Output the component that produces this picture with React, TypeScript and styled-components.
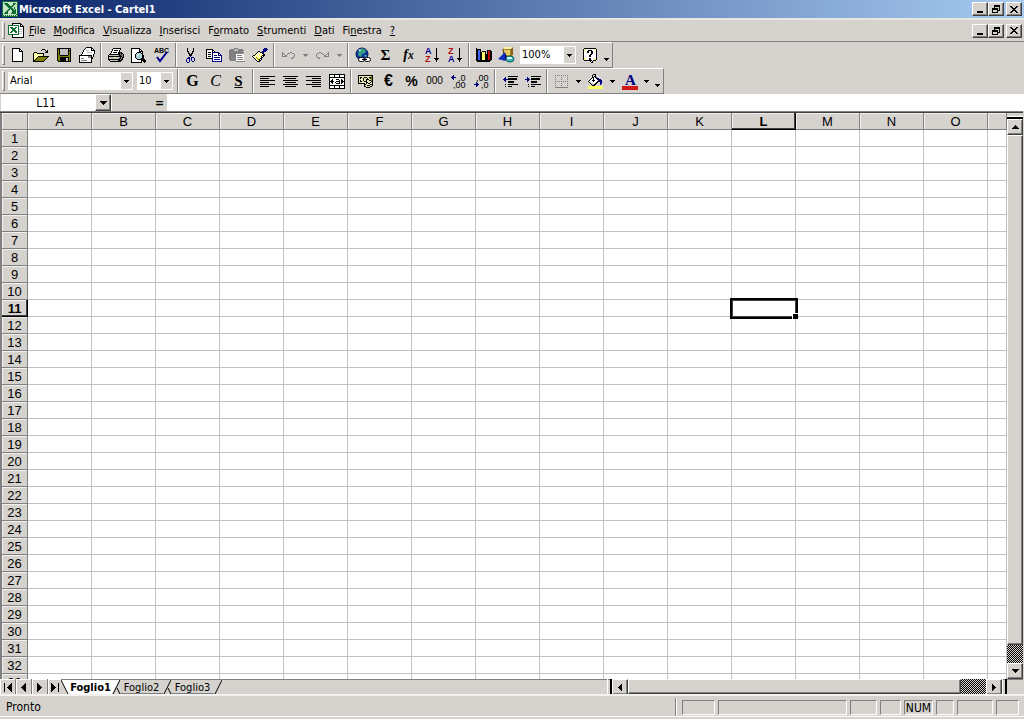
import React from "react";
import styled, { createGlobalStyle, css } from "styled-components";

const FACE = "#d6d3ce";
const SHADOW = "#808080";
const DARK = "#404040";
const UI = `"DejaVu Sans Condensed", "DejaVu Sans", sans-serif`;
const SHEET = `"Liberation Sans", Arial, sans-serif`;

const Global = createGlobalStyle`
  * { box-sizing: border-box; }
  body { margin: 0; background: ${FACE}; color: #000; font-family: ${UI}; font-size: 11px; }
  button, input, select { font-family: inherit; font-size: inherit; color: inherit; margin: 0; padding: 0; border: 0; border-radius: 0; background: none; outline: 0; }
`;

const raised = css`
  background: ${FACE};
  border: 1px solid;
  border-color: #fff ${DARK} ${DARK} #fff;
  box-shadow: inset -1px -1px 0 ${SHADOW};
`;
const checker = css`
  background: conic-gradient(#000 25%, ${FACE} 0 50%, #000 0 75%, ${FACE} 0) 0 0 / 2px 2px;
`;

/* ---------- pixel drawings ---------- */

const INK: Record<string, string> = {
  k: "#000", w: "#fff", y: "#ffff66", o: "#808000", g: "#808080", b: "#000080",
  l: "#c0c0c0", r: "#c00000", t: "#a8d0d8", u: "#4060ff", n: "#107030", c: "#c8e4c8", p: "#e4e4b0",
};

const Svg = styled.svg`
  display: block;
  flex: none;
`;

function Pixels({ rows }: { rows: string[] }) {
  const w = Math.max(...rows.map((r) => r.length));
  const runs: React.ReactNode[] = [];
  rows.forEach((row, y) => {
    let x = 0;
    while (x < row.length) {
      const ch = row[x];
      let n = 1;
      while (row[x + n] === ch) n++;
      if (INK[ch]) runs.push(<rect key={`${x}-${y}`} x={x} y={y} width={n} height={1} fill={INK[ch]} />);
      x += n;
    }
  });
  return (
    <Svg width={w} height={rows.length} viewBox={`0 0 ${w} ${rows.length}`} shapeRendering="crispEdges" aria-hidden>
      {runs}
    </Svg>
  );
}

const ART: Record<string, string[]> = {
  excel: [
    "nnnnnnnnnnnnnnnn", "nccccccccccccccn", "ncnnnncccccnnncn", "nccnnnnccccnnccn", "ncccnnnnccnncccn",
    "nccccnnnnnnccccn", "ncccccnnnnccnccn", "nccccccnnnncnccn", "ncccccnncnnncncn", "nccccnncccnnnncn",
    "ncccnnccccnnnncn", "nccnnnccccnnnncn", "ncnnnncccnnnnncn", "ncccccccccccccnn", "nncncncncncncncn", "nnnnnnnnnnnnnnnn",
  ],
  book: [
    "....kkkkkkkkk...", "....kwwwwwwwkk..", "nnnnnnnnnnnwkwk.", "nwwwwwwwwwnwkkkk", "nwnnnwwnnwnwwwwk", "nwwnnnnnwwnwwwwk",
    "nwwwnnnwwwnlllwk", "nwwwnnnnwwnwwwwk", "nwwnnwnnnwnlllwk", "nwnnwwwnnwnwwwwk", "nwwwwwwwwwnlllwk", "nnnnnnnnnnnwwwwk",
    "....kwwwwwwwwwwk", "....kwwwwwwwwwwk", "....kkkkkkkkkkkk",
  ],
  new: [
    "kkkkkkkk...", "kwwwwwwkk..", "kwwwwwwkwk.", "kwwwwwwkkkk", "kwwwwwwwwwk", "kwwwwwwwwwk", "kwwwwwwwwwk",
    "kwwwwwwwwwk", "kwwwwwwwwwk", "kwwwwwwwwwk", "kwwwwwwwwwk", "kwwwwwwwwwk", "kwwwwwwwwwk", "kkkkkkkkkkk",
  ],
  open: [
    ".........kkk....", "........k...k.k.", ".............kk.", ".kkk........kkk.", "kywykkkkkkk.....", "kwywywywywk.....",
    "kywywywywyk.....", "kwywykkkkkkkkkkk", "kywykoooooooook.", "kwykoooooooook..", "kykoooooooook...", "kkoooooooook....", "kkkkkkkkkkk.....",
  ],
  save: [
    "kkkkkkkkkkkkkk", "kokllllllllklk", "kokllllllllkkk", "kokllllllllkok", "kokllllllllkok", "kokllllllllkok", "kokllllllllkok",
    "kookkkkkkkkook", "kooooooooooook", "kookkkkkkkkkok", "kookkkkkkllkok", "kookkkkkkllkok", "kookkkkkkllkok", ".kkkkkkkkkkkkk",
  ],
  mail: [
    ".......kkkkkk...", "......kwwwwwkk..", ".....kwwwwwwkwk.", "....kwwlllwwkkkk", "....kwwwwwwwwwwk", "...kwwwwlllllwwk",
    "...kwwwwwwwwwwwk", "..kwwwwwwwwwwwk.", "kkkkkkkkkkkkkwk.", "kwwwwwwwwgggkwk.", "kwwwwwwwwgggkk..", "kwgggwwwwwwwkk..",
    "kwwwwwwwwwwwk...", "kwggggggwwwwk...", "kwwwwwwwwwwwk...", "kkkkkkkkkkkkk...",
  ],
  print: [
    ".....kkkkkkkk...", "....kwwwwwwwk...", "....kwkkkkwk....", "...kwwwwwwwk....", "...kwkkkkwkkkk..", "..kwwwwwwwkkgkk.",
    ".kkkkkkkkkkkgkgk", "kllllllllllkkggk", "kkkkkkkkkkkkkkgk", "klllllyyllllkgkk", "kllllllllllkkgk.", "kkkkkkkkkkkkgkk.",
    ".kllllllllkkkk..", "..kkkkkkkkkkk...",
  ],
  preview: [
    "kkkkkkkkk......", "kwwwwwwwkk.....", "kwwwwwwwkwk....", "kwwwwwwwkkkk...", "kwwwwwkkkkwk...", "kwwwwkttttkk...", "kwwwkttwtttk...",
    "kwwwktwttttkk..", "kwwwkttttttkk..", "kwwwkttttttkk..", "kwwwwkttttkkk..", "kwwwwwkkkkkkkk.", "kwwwwwwwwwkkkkk", "kwwwwwwwwwk.kkk", "kkkkkkkkkkk..k.",
  ],
  cut: [
    "..k.....k..", "..k.....k..", "..k.....k..", "..kk...kk..", "...k...k...", "...kk.kk...", "....kkk....", "....kkk....",
    ".....b.....", "...bb.bbb..", "..bbb.b..b.", ".b..b.b..b.", ".b..b.b..b.", ".b..b..bb..", "..bb.......",
  ],
  copy: [
    "kkkkkkk.........", "kwwwwwkk........", "kwwwwwkwk.......", "kwkkkwbbbbbbb...", "kwwwwwbwwwwwbb..", "kwkkkwbwwwwwbwb.", "kwwwwwbwbbbwbbbb",
    "kwkkkwbwwwwwwwwb", "kwwwwwbwbbbbbbwb", "kkkkkkbwwwwwwwwb", "......bwbbbbbbwb", "......bwwwwwwwwb", "......bbbbbbbbbb",
  ],
  paste: [
    ".....gggg......", ".ggggglllggggg.", "gggggllllgggggg", "gggggggggggggg.", "ggggggggggggggg", "gggggggggggggg.", "gggggggwwwwwww.", "gggggggwgggggww",
    "gggggggwwwwwwww", "gggggggwggggggw", "gggggggwwwwwwww", "gggggggwggggggw", ".ggggggwwwwwwww", ".......ggggggggg",
  ],
  brush: [
    "............bbb.", "...........bbbbb", "...........bbbb.", "......kk..bbbb..", ".....kwwkbkb....", "....kwywywkk....", "...kwywywywkk...",
    ".kkywywywykkk...", "kwywywywykwk....", ".kwyoywywkk.....", "..kwyoyykk......", "...kwyokwk......", "....kwykk.......", ".....kkk........",
  ],
  undo: [
    "g.......gg...", "gg....gg..gg.", "g.g..g......g", "g..gg.......g", "ggggg.......g", "..........gg.", ".........gg..",
  ],
  redo: [
    "...gg.......g", ".gg..gg....gg", "g......g..g.g", "g.......gg..g", "g.......ggggg", ".gg..........", "..gg.........",
  ],
  merge: [
    "kkkkkkkkkkkkkkkk", "kwwwwkwwwwkwwwwk", "kwwwwkwwwwkwwwwk", "kkkkkkkkkkkkkkkk", "kwwwwwwwwwwwwwwk", "kwwkwwwkkkwwkwwk", "kwkkwwwwwwkwkkwk",
    "kkkkkwwkkkkwkkkk", "kwkkwwkwwwkwkkwk", "kwwkwwwkkkkwkwwk", "kwwwwwwwwwwwwwwk", "kkkkkkkkkkkkkkkk", "kwwwwkwwwwkwwwwk", "kwwwwkwwwwkwwwwk", "kkkkkkkkkkkkkkkk",
  ],
  money: [
    "kkkkkkkkkkkkkkk", "kppppppppppppok", "kpkkppkkkppkkok", "kpkppkpppkppkok", "kppppkppkkkppok", "kpkppkppkppkkok",
    "kpkkppkkkppppkk", "kpppppppkkppkpk", "kkkkkkkpkpkkppk", "......kkppppkkk", "......kppkkkppk", "......kkppppkk.", "........kkkk...",
  ],
  left: ["kkkkkkkkkkkkkkk", "", "kkkkkkkkk", "", "kkkkkkkkkkkkkkk", "", "kkkkkkkkk", "", "kkkkkkkkkkkkkkk", "", "kkkkkkkkk"],
  center: ["kkkkkkkkkkkkkkk", "", "..kkkkkkkkkkk", "", "kkkkkkkkkkkkkkk", "", "..kkkkkkkkkkk", "", "kkkkkkkkkkkkkkk", "", "..kkkkkkkkkkk"],
  right: ["kkkkkkkkkkkkkkk", "", "......kkkkkkkkk", "", "kkkkkkkkkkkkkkk", "", "......kkkkkkkkk", "", "kkkkkkkkkkkkkkk", "", "......kkkkkkkkk"],
  outdent: [
    "......kkkkkkkkkk", "...b............", "..bb..kkkkkkkkk.", ".bbbbbkkkkkkkkk.", "..bb............", "...b..kkkkkk....", "......kkkkkk....", "................", "...k..kkkkkkkkkk", "", "...k..kkkk......",
  ],
  indent: [
    "......kkkkkkkkkk", "..b.............", "..bb..kkkkkkkkk.", "bbbbb.kkkkkkkkk.", "..bb............", "..b...kkkkkk....", "......kkkkkk....", "................", "...k..kkkkkkkkkk", "", "...k..kkkk......",
  ],
  borders: [
    "g.g.g.g.g.g.g", "", "g.....g.....g", "", "g.....g.....g", "", "g.g.g.g.g.g.g", "", "g.....g.....g", "", "g.....g.....g", "", "ggggggggggggg",
  ],
  fill: [
    ".....kkk.......", "....k..k.......", "....k.kk.......", "....kkwkb......", "...kwkwwkbb....", "..kwwkwwwkbbb..", ".kwwkkkwwwkbbb.", "kwwwwkwwwkkbbb.",
    ".klwwwwwkk..bb.", "..kllwwkk...bb.", "...kllkk....b..", "....kkk........", "yyyyyyyyyyyyyyy", "yyyyyyyyyyyyyyy", "yyyyyyyyyyyyyyy",
  ],
  chart: [
    "k...............", "kkkkk...........", "kkuuk......kkkk.", "kkuuk.kkkk.krrkk", "kkuukkyyyk.krrkk", "kkuukkyyyk.krrkk", "kkuukkyyykkkrrkk", "kkuukkyyykkkrrkk",
    "kkuukkyyykkkrrkk", "kkuukkyyykkkrrkk", "kkuukkyyykkkrrkk", "kkuukkyyykkkrrkk", "kkkkkkkkkkkkkkk.", ".kkkkkkkkkkkkk..",
  ],
  help: [
    ".kkkkkkkkkkkk.", "kyywwwwwwwwyyk", "kywwwkkkkwwwyk", "kwwwkkwwkkwwwk", "kwwwkkwwkkwwwk", "kwwwwwwwkkwwwk", "kwwwwwwkkwwwwk", "kwwwwwkkwwwwwk", "kwwwwwkkwwwwwk",
    "kwwwwwwwwwwwwk", "kywwwwkkwwwwyk", "kyywwwkkwwwyyk", ".kkkkkkkkwkkk.", ".......kwk....", "........kk....",
  ],
  minimize: ["", "", "", "", "", "", "kkkkkk", "kkkkkk"],
  restore: ["..kkkkkk", "..kkkkkk", "..k....k", "kkkkkk.k", "kkkkkk.k", "k....kkk", "k....k..", "kkkkkk.."],
  close: ["kk....kk", ".kk..kk.", "..kkkk..", "...kk...", "..kkkk..", ".kk..kk.", "kk....kk"],
  down: ["kkkkk", ".kkk.", "..k.."],
  downGrey: ["ggggg", ".ggg.", "..g.."],
  downBig: ["kkkkkkk", ".kkkkk.", "..kkk..", "...k..."],
  up: ["...k...", "..kkk..", ".kkkkk.", "kkkkkkk"],
  prev: ["...k", "..kk", ".kkk", "kkkk", ".kkk", "..kk", "...k"],
  next: ["k...", "kk..", "kkk.", "kkkk", "kkk.", "kk..", "k..."],
  navPrev: ["....k", "...kk", "..kkk", ".kkkk", "kkkkk", ".kkkk", "..kkk", "...kk", "....k"],
  navNext: ["k....", "kk...", "kkk..", "kkkk.", "kkkkk", "kkkk.", "kkk..", "kk...", "k...."],
  first: ["k......k", "k.....kk", "k....kkk", "k...kkkk", "k..kkkkk", "k...kkkk", "k....kkk", "k.....kk", "k......k"],
  last: ["k......k", "kk.....k", "kkk....k", "kkkk...k", "kkkkk..k", "kkkk...k", "kkk....k", "kk.....k", "k......k"],
};

const LetterText = styled.text<{ $serif?: boolean }>`
  font-family: ${(p) => (p.$serif ? `"Liberation Serif", serif` : `"Liberation Sans", sans-serif`)};
`;

function Spelling() {
  return (
    <Svg width="16" height="16" viewBox="0 0 16 16" aria-hidden>
      <LetterText x="0" y="6" fontSize="7" fontWeight="bold">ABC</LetterText>
      <path d="M3 10l3 4 7-9" fill="none" stroke="#000090" strokeWidth="2" />
    </Svg>
  );
}
function Globe() {
  return (
    <Svg width="18" height="17" viewBox="0 0 18 17" aria-hidden>
      <circle cx="8" cy="7" r="6" fill="#1038a0" stroke="#001050" />
      <path d="M5 3l3-2 4 2-1 3-3 1-1 3-3-2zM10 8l3 0-1 3z" fill="#38a080" />
      <path d="M4 4l2-2 1 2z" fill="#d0f0ff" />
      <g fill="#fff" stroke="#000">
        <rect x="4.500" y="10.500" width="6" height="4" rx="2" />
        <rect x="10.500" y="10.500" width="6" height="4" rx="2" />
      </g>
      <path d="M8 12.500h5" stroke="#000" />
    </Svg>
  );
}
function Sort({ desc }: { desc?: boolean }) {
  return (
    <Svg width="16" height="16" viewBox="0 0 16 16" aria-hidden>
      <LetterText x="1" y="7" fontSize="9" fontWeight="bold" fill={desc ? "#b01010" : "#000090"}>{desc ? "Z" : "A"}</LetterText>
      <LetterText x="1" y="15" fontSize="9" fontWeight="bold" fill={desc ? "#000090" : "#b01010"}>{desc ? "A" : "Z"}</LetterText>
      <path d="M12 1h1v10h2v1h-1v1h-1v2h-1v-2h-1v-1h-1v-1h2z" fill="#000" shapeRendering="crispEdges" />
    </Svg>
  );
}
function MapShapes() {
  return (
    <Svg width="17" height="16" viewBox="0 0 17 16" aria-hidden>
      <path d="M5 2h8v7H6z" fill="#e8c860" stroke="#504000" />
      <path d="M5 2l2-2h8l-2 2z" fill="#fff0a0" />
      <path d="M13 2l2-2v8l-2 1z" fill="#906010" />
      <path d="M0 12L7 5v9z" fill="#1030c0" />
      <path d="M7 5l2 6-2 3z" fill="#000070" />
      <ellipse cx="12" cy="12" rx="4" ry="3" fill="#40b8b0" stroke="#006060" />
      <path d="M9 11h5" stroke="#d0ffff" strokeWidth="2" />
    </Svg>
  );
}
function Decimals({ more }: { more?: boolean }) {
  return (
    <Svg width="18" height="16" viewBox="0 0 18 16" aria-hidden>
      <path
        d={more ? "M2 4h5v1H2zM3 3h1v3H3zM4 2h1v5H4z" : "M2 11h5v1H2zM4 9h1v5H4zM5 10h1v3H5z"}
        fill="#000080"
        shapeRendering="crispEdges"
      />
      <LetterText x={more ? 9 : 4} y="8" fontSize="9">{more ? ",0" : ",00"}</LetterText>
      <LetterText x={more ? 4 : 9} y="15" fontSize="9">{more ? ",00" : ",0"}</LetterText>
    </Svg>
  );
}
function FontColor() {
  return (
    <Svg width="16" height="18" viewBox="0 0 16 18" aria-hidden>
      <LetterText $serif x="3" y="13" fontSize="15" fontWeight="bold" fill="#000080">A</LetterText>
      <path d="M0 14h16v4H0z" fill="#d01818" />
    </Svg>
  );
}

/* ---------- window chrome ---------- */

const Window = styled.div`
  display: flex;
  flex-direction: column;
  height: 100vh;
  overflow: hidden;
`;
const TitleBar = styled.header`
  display: flex;
  align-items: center;
  gap: 1px;
  height: 18px;
  padding: 0 2px;
  background: linear-gradient(90deg, #0a246a, #a6caf0);
  color: #fff;
`;
const Title = styled.h1`
  flex: 1;
  margin: 0;
  font-size: 11px;
  line-height: 16px;
  padding-top: 1px;
  font-weight: bold;
`;
const WindowButtons = styled.div`
  display: flex;
  margin-left: auto;
`;
const WindowButton = styled.button`
  ${raised}
  display: flex;
  align-items: center;
  justify-content: center;
  width: 16px;
  height: 14px;
  &:last-child { margin-left: 2px; }
`;
const Grip = styled.span`
  width: 3px;
  margin: 2px 1px 2px 2px;
  border: 1px solid;
  border-color: #fff ${SHADOW} ${SHADOW} #fff;
`;
const MenuBar = styled.nav`
  display: flex;
  align-items: center;
  height: 24px;
  padding-right: 2px;
  border-top: 2px solid #e8e6e2;
  border-bottom: 1px solid ${SHADOW};
  ${Grip} { align-self: stretch; }
`;
const MenuItem = styled.button`
  padding: 1px 4px 0;
  line-height: 18px;
`;
const MenuIcon = styled.span`
  margin: 0 1px 0 2px;
`;
const Toolbar = styled.div`
  display: flex;
  align-self: flex-start;
  align-items: center;
  height: 26px;
  border: 1px solid;
  border-color: #fff ${SHADOW} ${SHADOW} transparent;
  border-left: 0;
  ${Grip} { align-self: stretch; }
`;
const Tool = styled.button`
  display: flex;
  align-items: center;
  justify-content: center;
  width: 23px;
  height: 22px;
`;
const DropArrow = styled(Tool)`
  width: 11px;
`;
const Overflow = styled(Tool)`
  width: 11px;
  padding-top: 8px;
`;
const Divider = styled.span`
  width: 2px;
  height: 24px;
  margin: 0 2px;
  border-left: 1px solid ${SHADOW};
  border-right: 1px solid #fff;
`;
const Glyph = styled.span<{ $size: number; $serif?: boolean; $bold?: boolean; $italic?: boolean; $underline?: boolean }>`
  font-family: ${(p) => (p.$serif ? `"Liberation Serif", serif` : SHEET)};
  font-size: ${(p) => p.$size}px;
  line-height: 18px;
  font-weight: ${(p) => (p.$bold ? "bold" : "normal")};
  font-style: ${(p) => (p.$italic ? "italic" : "normal")};
  text-decoration: ${(p) => (p.$underline ? "underline" : "none")};
`;
const Combo = styled.span<{ $w: number }>`
  position: relative;
  width: ${(p) => p.$w}px;
  height: 18px;
  margin: 0 2px;
  background: #fff;
  select {
    appearance: none;
    width: 100%;
    height: 18px;
    padding-left: 2px;
    font-size: 11px;
    line-height: 18px;
  }
`;
const ComboArrow = styled.span`
  position: absolute;
  top: 1px;
  right: 1px;
  display: flex;
  align-items: center;
  justify-content: center;
  width: 11px;
  height: 16px;
  background: ${FACE};
  pointer-events: none;
`;

const FormulaBar = styled.div`
  display: flex;
  height: 17px;
  background: ${FACE};
`;
const NameBox = styled.input`
  width: 95px;
  padding-right: 4px;
  background: #fff;
  border-left: 1px solid ${FACE};
  font-size: 12px;
  text-align: center;
`;
const NameDrop = styled.button`
  ${raised}
  display: flex;
  align-items: center;
  justify-content: center;
  width: 16px;
`;
const EqualsButton = styled.button`
  width: 57px;
  padding-right: 3px;
  border-left: 1px solid #fff;
  border-right: 1px solid #fff;
  font-size: 12px;
  line-height: 16px;
  font-weight: bold;
  text-align: right;
`;
const FormulaInput = styled.input`
  flex: 1;
  min-width: 0;
  background: #fff;
`;

/* ---------- sheet ---------- */

const Book = styled.main`
  display: flex;
  flex-direction: column;
  flex: 1;
  min-height: 0;
  margin-right: 1px;
  border-top: 1px solid ${SHADOW};
`;
const SheetRow = styled.div`
  display: flex;
  flex: 1;
  min-height: 0;
  border-top: 1px solid ${DARK};
`;
const GridArea = styled.div`
  flex: 1;
  min-width: 0;
  overflow: hidden;
  background: #fff;
  border-left: 2px solid ${SHADOW};
`;
const Grid = styled.table`
  width: 100%;
  table-layout: fixed;
  border-collapse: separate;
  border-spacing: 0;
  font-family: ${SHEET};
  font-size: 13px;
  line-height: 14px;
`;
const IndexCol = styled.col`
  width: 26px;
`;
const DataCol = styled.col`
  width: 64px;
`;
const Head = styled.th<{ $active?: boolean }>`
  height: 17px;
  padding: 2px 0 0;
  overflow: hidden;
  background: ${FACE};
  font-weight: ${(p) => (p.$active ? "bold" : "normal")};
  text-align: center;
  border-right: 1px solid ${(p) => (p.$active ? "#000" : SHADOW)};
  border-bottom: 1px solid ${(p) => (p.$active ? "#000" : SHADOW)};
  box-shadow: ${(p) => (p.$active ? `inset -1px -1px 0 ${DARK}, ` : "")}inset 1px 1px 0 #f2f0ee;
`;
const Cell = styled.td`
  height: 17px;
  padding: 0;
  border-right: 1px solid #c0c0c0;
  border-bottom: 1px solid #c0c0c0;
`;
const SelectedCell = styled(Cell)`
  position: relative;
  &::before {
    content: "";
    position: absolute;
    inset: -2px;
    border: 2px solid #000;
    outline: 1px solid ${DARK};
    outline-offset: -3px;
    margin: 0 -1px -1px 0;
  }
  &::after {
    content: "";
    position: absolute;
    right: -3px;
    bottom: -3px;
    width: 5px;
    height: 5px;
    background: #000;
    border: solid #fff;
    border-width: 1px 0 0 1px;
    box-sizing: content-box;
  }
`;
const VScroll = styled.div`
  display: flex;
  flex-direction: column;
  width: 16px;
  background: ${FACE};
`;
const VSplit = styled.span`
  height: 6px;
  border-top: 3px solid ${FACE};
  border-bottom: 2px solid #000;
  background: #fff;
`;
const ScrollButton = styled.button<{ $w: number }>`
  ${raised}
  display: flex;
  flex: none;
  align-items: center;
  justify-content: center;
  width: ${(p) => p.$w}px;
  height: 16px;
`;
const Thumb = styled.span`
  ${raised}
  flex: 1;
`;
const VTrack = styled.span`
  ${checker}
  height: 18px;
`;
const HTrack = styled.span`
  ${checker}
  width: 25px;
`;

const TabRow = styled.div`
  display: flex;
  height: 15px;
  box-shadow: inset 0 1px 0 ${SHADOW};
`;
const NavButton = styled.button`
  display: flex;
  align-items: center;
  justify-content: center;
  width: 16px;
  padding-top: 1px;
  border-right: 1px solid ${SHADOW};
  box-shadow: inset 1px 1px 0 #fff;
  &:nth-child(4) { width: 13px; border-right: 0; }
`;
const Tabs = styled.div`
  display: flex;
  flex: 1;
  min-width: 0;
`;
const Tab = styled.button<{ $active?: boolean }>`
  width: 43px;
  padding: 1px 0 0;
  font-size: 11px;
  line-height: 13px;
  font-weight: ${(p) => (p.$active ? "bold" : "normal")};
  background: ${(p) => (p.$active ? "#fff" : FACE)};
  border-top: 1px solid ${SHADOW};
  border-bottom: 1px solid ${(p) => (p.$active ? "#fff" : SHADOW)};
  white-space: nowrap;
`;
const HScroll = styled.div`
  display: flex;
  width: 400px;
`;
const HSplit = styled.span`
  width: 5px;
  border: solid;
  border-width: 0 2px 0 1px;
  border-color: #fff #000 #fff #fff;
`;
const Corner = styled.span`
  width: 16px;
`;

function TabEdge({ kind }: { kind: "start" | "activeEnd" | "between" | "end" }) {
  return (
    <Svg width="8" height="15" viewBox="0 0 8 15" aria-hidden>
      {kind === "start" && <path d="M0 1L7 15H8V1z" fill="#fff" />}
      {kind === "activeEnd" && <path d="M0 1H7L0 15z" fill="#fff" />}
      {kind === "start" ? (
        <path d="M0 1L7 15" stroke="#000" fill="none" />
      ) : (
        <path d="M8 1L1 15" stroke="#000" fill="none" />
      )}
      {(kind === "activeEnd" || kind === "between") && <path d="M5 9l3 6" stroke="#000" fill="none" />}
    </Svg>
  );
}

const StatusBar = styled.footer`
  display: flex;
  align-items: center;
  gap: 3px;
  height: 25px;
  padding: 2px 5px 3px 6px;
  border-top: 2px solid #f4f2f0;
  box-shadow: inset 0 -2px 0 ${FACE}, inset 0 -3px 0 #fff;
  font-size: 12px;
`;
const StatusText = styled.span`
  flex: 1;
  line-height: 18px;
`;
const StatusRule = styled.span`
  width: 2px;
  height: 18px;
  margin-right: 2px;
  border-left: 1px solid ${SHADOW};
  border-right: 1px solid #fff;
`;
const Pane = styled.span<{ $w: number }>`
  width: ${(p) => p.$w}px;
  height: 15px;
  border: 1px solid;
  border-color: ${SHADOW} #fff #fff ${SHADOW};
  line-height: 14px;
  text-align: center;
`;

const MENUS: [string, string, string][] = [
  ["", "F", "ile"], ["", "M", "odifica"], ["", "V", "isualizza"], ["", "I", "nserisci"], ["F", "o", "rmato"],
  ["", "S", "trumenti"], ["", "D", "ati"], ["Fi", "n", "estra"], ["", "?", ""],
];
const COLUMNS = "ABCDEFGHIJKLMNO".split("");
const ROWS = Array.from({ length: 33 }, (_, i) => i + 1);

function Controls() {
  return (
    <WindowButtons>
      <WindowButton aria-label="Riduci a icona"><Pixels rows={ART.minimize} /></WindowButton>
      <WindowButton aria-label="Ripristina"><Pixels rows={ART.restore} /></WindowButton>
      <WindowButton aria-label="Chiudi"><Pixels rows={ART.close} /></WindowButton>
    </WindowButtons>
  );
}
function ArtTool({ art, label }: { art: string; label: string }) {
  return <Tool aria-label={label}><Pixels rows={ART[art]} /></Tool>;
}
function Arrow({ grey, label }: { grey?: boolean; label: string }) {
  return <DropArrow aria-label={label}><Pixels rows={grey ? ART.downGrey : ART.down} /></DropArrow>;
}
function ComboBox({ w, value, label }: { w: number; value: string; label: string }) {
  return (
    <Combo $w={w}>
      <select aria-label={label} defaultValue={value}><option>{value}</option></select>
      <ComboArrow><Pixels rows={ART.down} /></ComboArrow>
    </Combo>
  );
}

export default function App() {
  return (
    <Window>
      <Global />
      <TitleBar>
        <Pixels rows={ART.excel} />
        <Title>Microsoft Excel - Cartel1</Title>
        <Controls />
      </TitleBar>
      <MenuBar>
        <Grip />
        <MenuIcon><Pixels rows={ART.book} /></MenuIcon>
        {MENUS.map(([a, b, c]) => (
          <MenuItem key={a + b + c}>{a}<u>{b}</u>{c}</MenuItem>
        ))}
        <Controls />
      </MenuBar>
      <Toolbar role="toolbar" aria-label="Standard">
        <Grip />
        <ArtTool art="new" label="Nuovo" />
        <ArtTool art="open" label="Apri" />
        <ArtTool art="save" label="Salva" />
        <ArtTool art="mail" label="Posta elettronica" />
        <Divider />
        <ArtTool art="print" label="Stampa" />
        <ArtTool art="preview" label="Anteprima di stampa" />
        <Tool aria-label="Controllo ortografia"><Spelling /></Tool>
        <Divider />
        <ArtTool art="cut" label="Taglia" />
        <ArtTool art="copy" label="Copia" />
        <ArtTool art="paste" label="Incolla" />
        <ArtTool art="brush" label="Copia formato" />
        <Divider />
        <ArtTool art="undo" label="Annulla" />
        <Arrow grey label="Elenco annulla" />
        <ArtTool art="redo" label="Ripristina" />
        <Arrow grey label="Elenco ripristina" />
        <Divider />
        <Tool aria-label="Collegamento ipertestuale"><Globe /></Tool>
        <Tool aria-label="Somma"><Glyph $serif $bold $size={15}>Σ</Glyph></Tool>
        <Tool aria-label="Funzione"><Glyph $serif $bold $italic $size={14}>f<small>x</small></Glyph></Tool>
        <Tool aria-label="Ordinamento crescente"><Sort /></Tool>
        <Tool aria-label="Ordinamento decrescente"><Sort desc /></Tool>
        <Divider />
        <ArtTool art="chart" label="Grafico" />
        <Tool aria-label="Disegno"><MapShapes /></Tool>
        <ComboBox w={56} value="100%" label="Zoom" />
        <ArtTool art="help" label="Guida" />
        <Overflow aria-label="Altri pulsanti"><Pixels rows={ART.down} /></Overflow>
      </Toolbar>
      <Toolbar role="toolbar" aria-label="Formattazione">
        <Grip />
        <ComboBox w={125} value="Arial" label="Tipo di carattere" />
        <ComboBox w={36} value="10" label="Dimensione" />
        <Divider />
        <Tool aria-label="Grassetto"><Glyph $serif $bold $size={16}>G</Glyph></Tool>
        <Tool aria-label="Corsivo"><Glyph $serif $italic $size={16}>C</Glyph></Tool>
        <Tool aria-label="Sottolineato"><Glyph $serif $bold $underline $size={15}>S</Glyph></Tool>
        <Divider />
        <ArtTool art="left" label="Allinea a sinistra" />
        <ArtTool art="center" label="Centra" />
        <ArtTool art="right" label="Allinea a destra" />
        <ArtTool art="merge" label="Unisci e centra" />
        <Divider />
        <ArtTool art="money" label="Valuta" />
        <Tool aria-label="Euro"><Glyph $bold $size={16}>€</Glyph></Tool>
        <Tool aria-label="Stile percentuale"><Glyph $bold $size={14}>%</Glyph></Tool>
        <Tool aria-label="Stile separatore"><Glyph $size={10}>000</Glyph></Tool>
        <Tool aria-label="Aumenta decimali"><Decimals more /></Tool>
        <Tool aria-label="Diminuisci decimali"><Decimals /></Tool>
        <Divider />
        <ArtTool art="outdent" label="Riduci rientro" />
        <ArtTool art="indent" label="Aumenta rientro" />
        <Divider />
        <ArtTool art="borders" label="Bordi" />
        <Arrow label="Elenco bordi" />
        <ArtTool art="fill" label="Colore riempimento" />
        <Arrow label="Elenco colori riempimento" />
        <Tool aria-label="Colore carattere"><FontColor /></Tool>
        <Arrow label="Elenco colori carattere" />
        <Overflow aria-label="Altri pulsanti"><Pixels rows={ART.down} /></Overflow>
      </Toolbar>
      <FormulaBar>
        <NameBox aria-label="Casella nome" defaultValue="L11" />
        <NameDrop aria-label="Elenco nomi"><Pixels rows={ART.downBig} /></NameDrop>
        <EqualsButton aria-label="Modifica formula">=</EqualsButton>
        <FormulaInput aria-label="Formula" />
      </FormulaBar>
      <Book>
        <SheetRow>
          <GridArea>
            <Grid>
              <colgroup>
                <IndexCol />
                {COLUMNS.map((c) => <DataCol key={c} />)}
                <col />
              </colgroup>
              <thead>
                <tr>
                  <Head />
                  {COLUMNS.map((c) => <Head key={c} scope="col" $active={c === "L"}>{c}</Head>)}
                  <Head />
                </tr>
              </thead>
              <tbody>
                {ROWS.map((r) => (
                  <tr key={r}>
                    <Head scope="row" $active={r === 11}>{r}</Head>
                    {COLUMNS.map((c) => (r === 11 && c === "L" ? <SelectedCell key={c} /> : <Cell key={c} />))}
                    <Cell />
                  </tr>
                ))}
              </tbody>
            </Grid>
          </GridArea>
          <VScroll>
            <VSplit />
            <ScrollButton $w={16} aria-label="Scorri su"><Pixels rows={ART.up} /></ScrollButton>
            <Thumb />
            <VTrack />
            <ScrollButton $w={16} aria-label="Scorri giù"><Pixels rows={ART.downBig} /></ScrollButton>
          </VScroll>
        </SheetRow>
        <TabRow>
          <NavButton aria-label="Primo foglio"><Pixels rows={ART.first} /></NavButton>
          <NavButton aria-label="Foglio precedente"><Pixels rows={ART.navPrev} /></NavButton>
          <NavButton aria-label="Foglio successivo"><Pixels rows={ART.navNext} /></NavButton>
          <NavButton aria-label="Ultimo foglio"><Pixels rows={ART.last} /></NavButton>
          <Tabs>
            <TabEdge kind="start" />
            <Tab $active>Foglio1</Tab>
            <TabEdge kind="activeEnd" />
            <Tab>Foglio2</Tab>
            <TabEdge kind="between" />
            <Tab>Foglio3</Tab>
            <TabEdge kind="end" />
          </Tabs>
          <HScroll>
            <HSplit />
            <ScrollButton $w={16} aria-label="Scorri a sinistra"><Pixels rows={ART.prev} /></ScrollButton>
            <Thumb />
            <HTrack />
            <ScrollButton $w={16} aria-label="Scorri a destra"><Pixels rows={ART.next} /></ScrollButton>
            <HSplit />
          </HScroll>
          <Corner />
        </TabRow>
      </Book>
      <StatusBar>
        <StatusText>Pronto</StatusText>
        <StatusRule />
        <Pane $w={33} />
        <Pane $w={129} />
        <Pane $w={27} />
        <Pane $w={21} />
        <Pane $w={29}>NUM</Pane>
        <Pane $w={18} />
        <Pane $w={36} />
        <Pane $w={23} />
      </StatusBar>
    </Window>
  );
}
